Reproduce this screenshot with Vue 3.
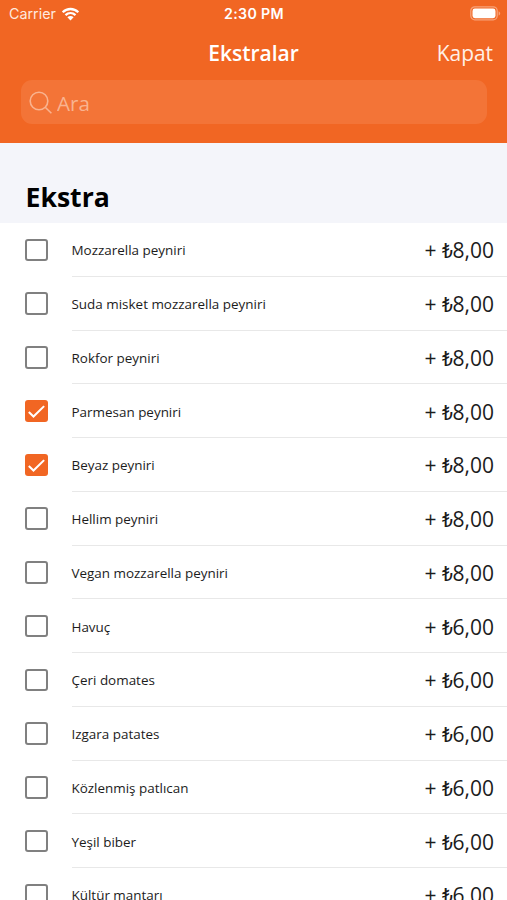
<script setup>
import { ref } from 'vue'

const search = ref('')
const extras = ref([
  { name: 'Mozzarella peyniri', price: '8,00', checked: false },
  { name: 'Suda misket mozzarella peyniri', price: '8,00', checked: false },
  { name: 'Rokfor peyniri', price: '8,00', checked: false },
  { name: 'Parmesan peyniri', price: '8,00', checked: true },
  { name: 'Beyaz peyniri', price: '8,00', checked: true },
  { name: 'Hellim peyniri', price: '8,00', checked: false },
  { name: 'Vegan mozzarella peyniri', price: '8,00', checked: false },
  { name: 'Havuç', price: '6,00', checked: false },
  { name: 'Çeri domates', price: '6,00', checked: false },
  { name: 'Izgara patates', price: '6,00', checked: false },
  { name: 'Közlenmiş patlıcan', price: '6,00', checked: false },
  { name: 'Yeşil biber', price: '6,00', checked: false },
  { name: 'Kültür mantarı', price: '6,00', checked: false }
])
</script>

<template>
  <main class="screen">
    <header class="header">
      <div class="status">
        <div class="carrier">
          <span>Carrier</span>
          <svg class="wifi" viewBox="0 0 18 14">
            <path d="M1.2 5.2C5.6 .9 12.4 .9 16.8 5.2M4 8.2c2.9-2.7 7.1-2.7 10 0" fill="none" stroke="#fff" stroke-width="2.3" />
            <path d="M5.9 10.3c1.8-1.6 4.4-1.6 6.2 0L9 13.6z" fill="#fff" />
          </svg>
        </div>
        <span class="time">2:30 PM</span>
        <svg class="battery" viewBox="0 0 31 15">
          <rect x=".8" y=".8" width="26.4" height="13" rx="4" fill="none" stroke="#f7a27a" stroke-width="1.3" />
          <rect x="2.5" y="2.6" width="23" height="9.6" rx="2.4" fill="#fff" />
          <path d="M28.6 5.2c2.1.8 2.1 3.6 0 4.4z" fill="#f7a27a" />
        </svg>
      </div>
      <nav class="nav">
        <h1 class="title">Ekstralar</h1>
        <button class="close">Kapat</button>
      </nav>
      <label class="search">
        <svg class="glass" viewBox="0 0 24 24">
          <circle cx="10" cy="10" r="8.8" />
          <path d="M16.2 16.2l6.2 6.1" />
        </svg>
        <input v-model="search" placeholder="Ara" />
      </label>
    </header>
    <h2 class="section">Ekstra</h2>
    <ul class="list">
      <li v-for="item in extras" :key="item.name" class="row" @click="item.checked = !item.checked">
        <span class="box" :class="{ on: item.checked }">
          <svg v-if="item.checked" viewBox="0 0 22 22"><path d="M3.7 11.8l4.6 4.4L18.7 6" /></svg>
        </span>
        <div class="body">
          <span class="name">{{ item.name }}</span>
          <span class="price">+ <span class="lira">₺</span>{{ item.price }}</span>
        </div>
      </li>
    </ul>
  </main>
</template>

<style>
body { margin: 0; overflow: hidden; }
</style>

<style scoped>
.screen {
  display: flex;
  flex-direction: column;
  height: 900px;
  overflow: hidden;
  background: #fff;
  font-family: "Open Sans", "Noto Sans", sans-serif;
}
.header {
  flex: none;
  box-sizing: border-box;
  height: 142.5px;
  background: #f16623;
  color: #fff;
}
.status {
  display: grid;
  grid-template-columns: 1fr auto 1fr;
  align-items: center;
  height: 27px;
  padding: 0 6px 0 9px;
  font: 14.3px/27px Inter, sans-serif;
}
.carrier { display: flex; align-items: center; gap: 5.5px; color: #ffe9df; }
.wifi { width: 19px; height: 14px; }
.time { margin-right: 2px; font-size: 14.2px; font-weight: 600; letter-spacing: .35px; }
.battery { justify-self: end; width: 31px; height: 15px; }
.nav {
  display: grid;
  grid-template-columns: 1fr auto 1fr;
  align-items: center;
  height: 53px;
  padding: 0 14px;
}
.title { grid-column: 2; margin: 0; font-size: 21px; font-weight: 600; line-height: 53px; }
.close {
  justify-self: end;
  padding: 0;
  border: 0;
  background: none;
  color: #fff0e8;
  font: 20.9px/53px "Open Sans", sans-serif;
}
.search {
  display: flex;
  align-items: center;
  gap: 4px;
  box-sizing: border-box;
  height: 44px;
  margin: 0 20px 0 21px;
  padding: 1px 0 0 8px;
  border-radius: 11px;
  background: #f37437;
}
.glass { width: 24px; height: 24px; fill: none; stroke: #f9b38f; stroke-width: 1.6; }
.search input {
  flex: 1;
  min-width: 0;
  padding: 0;
  border: 0;
  outline: 0;
  background: none;
  color: #fff;
  font: 20.6px/42px "Open Sans", sans-serif;
}
.search input::placeholder { color: #f9b38f; opacity: 1; }
.section {
  flex: none;
  box-sizing: border-box;
  height: 80.5px;
  margin: 0;
  padding: 36.5px 25.5px 0;
  background: #f4f5fa;
  color: #000;
  font-size: 26.6px;
  font-weight: 700;
  line-height: 36px;
}
.list { flex: none; margin: 0; padding: 0; list-style: none; }
.row { display: flex; align-items: center; gap: 24px; height: 53.75px; padding-left: 25px; }
.box {
  flex: none;
  box-sizing: border-box;
  width: 22.5px;
  height: 22.5px;
  border: 2px solid #808080;
  border-radius: 3px;
}
.box.on { border: 0; background: #f16623; }
.box svg { display: block; width: 100%; height: 100%; fill: none; stroke: #fff; stroke-width: 2; }
.body {
  flex: 1;
  display: flex;
  align-items: center;
  justify-content: space-between;
  box-sizing: border-box;
  height: 100%;
  padding: 2px 13px 0 0;
  border-bottom: 1px solid #e8e8e8;
  color: #1c1c1c;
}
.name { font-size: 13.45px; }
.price { font-size: 21px; line-height: 30px; }
.lira { display: inline-block; width: 10.5px; font: 400 20px/1 Roboto, sans-serif; }
</style>
